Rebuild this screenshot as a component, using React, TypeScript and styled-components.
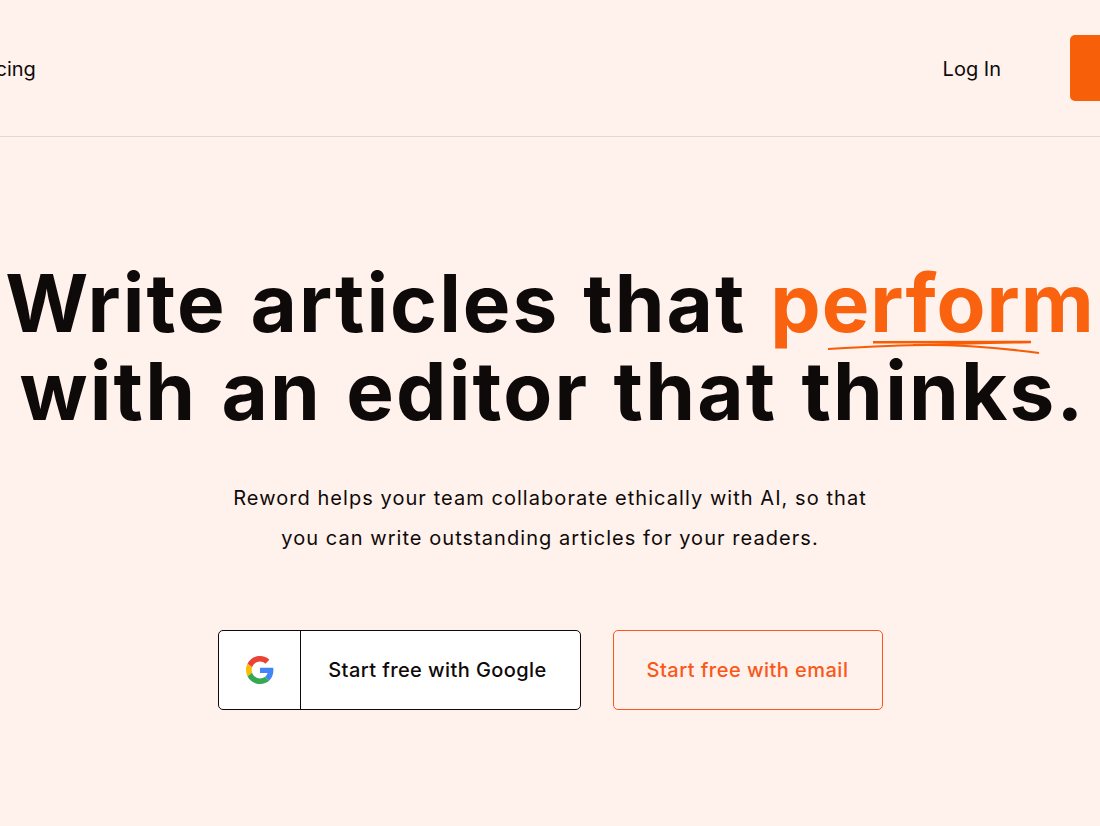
import styled, { createGlobalStyle } from "styled-components";

const GlobalStyle = createGlobalStyle`
  html, body {
    margin: 0;
    padding: 0;
    height: 100%;
    overflow: hidden;
    background: #fff1eb;
  }
  body {
    font-family: "Inter", "Liberation Sans", sans-serif;
    color: #0f0a0a;
  }
`;

const Page = styled.div`
  width: 1100px;
  height: 826px;
  overflow: hidden;
  background: #fff1eb;
`;

const Navbar = styled.nav`
  height: 136px;
  border-bottom: 1px solid #e6d8cf;
  display: flex;
  align-items: center;
  justify-content: space-between;
  margin-right: -60px;
  margin-left: -30px;
`;

const NavLink = styled.a`
  font-size: 20px;
  line-height: 30px;
  padding-top: 1px;
  color: #0f0a0a;
`;

const NavRight = styled.div`
  display: flex;
  align-items: center;
  gap: 69px;
`;

const CtaButton = styled.div`
  width: 90px;
  height: 66px;
  border-radius: 5px;
  background: #f75f08;
`;

const Hero = styled.section`
  display: flex;
  flex-direction: column;
  align-items: center;
  padding-top: 122px;
`;

const Title = styled.h1`
  margin: 0;
  font-size: 80px;
  line-height: 88px;
  font-weight: 700;
  text-align: center;
  white-space: nowrap;
  letter-spacing: 2px;
  word-spacing: 3px;
  color: #0f0a0a;
`;

const SecondLine = styled.span`
  display: block;
  letter-spacing: 2.2px;
  padding-left: 5px;
`;

const Accent = styled.span`
  position: relative;
  color: #f9620f;
  letter-spacing: 1px;
`;

const Scribble = styled.svg`
  position: absolute;
  left: 58px;
  top: 85px;
  width: 214px;
  height: 16px;
`;

const Lead = styled.p`
  margin: 43px 0 0;
  font-size: 20px;
  line-height: 40px;
  letter-spacing: 1.05px;
  text-align: center;
  color: #0f0a0a;
`;

const Actions = styled.div`
  display: flex;
  gap: 32px;
  margin-top: 72px;
`;

const GoogleButton = styled.div`
  display: flex;
  width: 363px;
  height: 80px;
  box-sizing: border-box;
  border: 1px solid #0f0a0a;
  border-radius: 5px;
  background: #ffffff;
  font-size: 20px;
  font-weight: 500;
  letter-spacing: 0.42px;
`;

const IconCell = styled.div`
  width: 81px;
  border-right: 1px solid #0f0a0a;
  display: flex;
  align-items: center;
  justify-content: center;

  svg {
    margin-left: 1px;
  }
`;

const ButtonLabel = styled.div`
  flex: 1;
  display: flex;
  align-items: center;
  justify-content: center;
  padding-right: 5px;
`;

const EmailButton = styled.div`
  display: flex;
  align-items: center;
  justify-content: center;
  width: 270px;
  height: 80px;
  box-sizing: border-box;
  border: 1px solid #f9581a;
  border-radius: 5px;
  color: #f9581a;
  font-size: 20px;
  font-weight: 500;
  letter-spacing: 0.47px;
`;

const GoogleIcon = () => (
  <svg width="28" height="28" viewBox="0 0 48 48">
    <path fill="#EA4335" d="M24 9.5c3.54 0 6.71 1.22 9.21 3.6l6.85-6.85C35.9 2.38 30.47 0 24 0 14.62 0 6.51 5.38 2.56 13.22l7.98 6.19C12.43 13.72 17.74 9.5 24 9.5z" />
    <path fill="#4285F4" d="M46.98 24.55c0-1.57-.15-3.09-.38-4.55H24v9.02h12.94c-.58 2.96-2.26 5.48-4.78 7.18l7.73 6c4.51-4.18 7.09-10.36 7.09-17.65z" />
    <path fill="#FBBC05" d="M10.53 28.59c-.48-1.45-.76-2.99-.76-4.59s.27-3.14.76-4.59l-7.98-6.19C.92 16.46 0 20.12 0 24c0 3.88.92 7.54 2.56 10.78l7.97-6.19z" />
    <path fill="#34A853" d="M24 48c6.48 0 11.93-2.13 15.89-5.81l-7.73-6c-2.15 1.45-4.92 2.3-8.16 2.3-6.26 0-11.57-4.22-13.47-9.91l-7.98 6.19C6.51 42.62 14.62 48 24 48z" />
  </svg>
);

export default function App() {
  return (
    <Page>
      <GlobalStyle />
      <Navbar>
        <NavLink>Pricing</NavLink>
        <NavRight>
          <NavLink>Log In</NavLink>
          <CtaButton />
        </NavRight>
      </Navbar>
      <Hero>
        <Title>
          Write articles that{" "}
          <Accent>
            perform
            <Scribble viewBox="0 0 214 16" fill="none">
              <path d="M0 10 C 35 8, 70 6, 100 6 C 140 6, 180 10, 211 14" stroke="#f95c05" strokeWidth="2.2" />
              <path d="M45 3.2 L 203 3" stroke="#f95c05" strokeWidth="2.4" />
              <path d="M85 6 C 120 5, 160 4, 203 3" stroke="#f95c05" strokeWidth="2" />
            </Scribble>
          </Accent>
          <SecondLine>with an editor that thinks.</SecondLine>
        </Title>
        <Lead>
          Reword helps your team collaborate ethically with AI, so that
          <br />
          you can write outstanding articles for your readers.
        </Lead>
        <Actions>
          <GoogleButton>
            <IconCell>
              <GoogleIcon />
            </IconCell>
            <ButtonLabel>Start free with Google</ButtonLabel>
          </GoogleButton>
          <EmailButton>Start free with email</EmailButton>
        </Actions>
      </Hero>
    </Page>
  );
}
